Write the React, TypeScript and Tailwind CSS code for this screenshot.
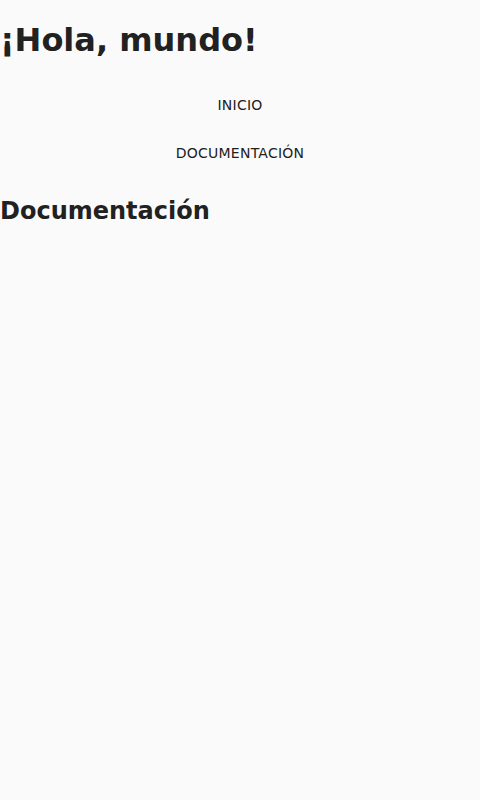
export default function App() {
  return (
    <div className="min-h-[800px] bg-[#fafafa] text-[#212121] font-['DejaVu_Sans',sans-serif] pt-[22px] flow-root">
      <h1 className="text-[32px] font-bold leading-[37px] mb-[22px]">¡Hola, mundo!</h1>
      <nav className="flex flex-col">
        <a href="#" className="h-12 flex items-center justify-center text-sm tracking-[0.25px] uppercase">
          Inicio
        </a>
        <a href="#" className="h-12 flex items-center justify-center text-sm tracking-[0.25px] uppercase">
          Documentación
        </a>
      </nav>
      <h2 className="text-2xl font-bold leading-[28px] mt-[20px]">Documentación</h2>
    </div>
  );
}
